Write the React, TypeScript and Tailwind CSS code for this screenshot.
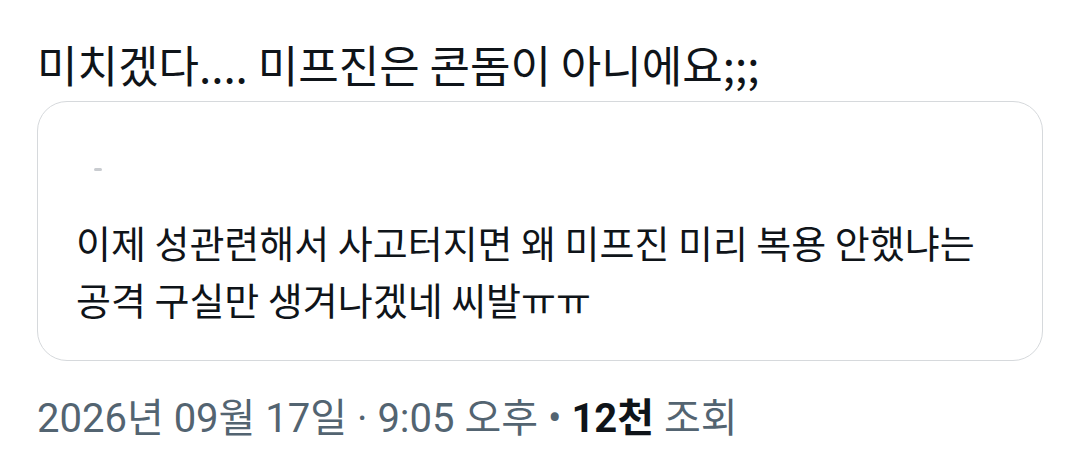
import React from 'react';

export default function App() {
  return (
    <div className="w-[1080px] h-[464px] bg-white overflow-hidden pl-[37px] pr-[37px] pt-[32px] text-[#0f1419] font-['Noto_Sans_CJK_KR',sans-serif]">
      {/* tweet body */}
      <p className="text-[44px] leading-[64px]">미치겠다.... 미프진은 콘돔이 아니에요;;;</p>

      {/* quoted tweet card */}
      <div className="mt-[5px] h-[260px] rounded-[30px] border border-[#d6d9dc] pl-[38px] pr-6 pt-[66px]">
        <div className="h-[3px] w-[8px] ml-[18px] bg-[#c9ccd0] rounded-full" />
        <p className="mt-[42px] text-[38px] leading-[57px]">
          이제 성관련해서 사고터지면 왜 미프진 미리 복용 안했냐는
          <br />
          공격 구실만 생겨나겠네 씨발ㅠㅠ
        </p>
      </div>

      {/* meta row */}
      <p className="mt-[33px] text-[40px] leading-[50px] text-[#536471] font-['Roboto','Noto_Sans_CJK_KR',sans-serif]">
        2026년 09월 17일 · 9:05 오후 • <span className="font-bold text-[#0f1419]">12천</span> 조회
      </p>
    </div>
  );
}
